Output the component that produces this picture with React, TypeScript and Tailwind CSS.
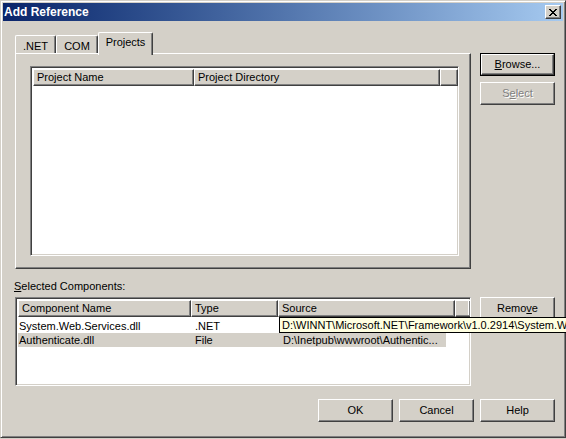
import type { ReactNode } from "react";
import clsx from "clsx";

// Win2000 classic 3D edges
const RAISED =
  "border border-t-white border-l-white border-r-[#404040] border-b-[#404040] shadow-[inset_-1px_-1px_0_#808080]";
const SUNKEN =
  "border border-t-[#808080] border-l-[#808080] border-r-white border-b-white shadow-[inset_1px_1px_0_#404040,inset_-1px_-1px_0_#d4d0c8]";

function Button({
  children,
  isDefault,
  disabled,
}: {
  children: ReactNode;
  isDefault?: boolean;
  disabled?: boolean;
}) {
  return (
    <div className={clsx("h-[23px] w-[75px]", isDefault && "border border-black")}>
      <div
        className={clsx(
          "flex h-full w-full items-center justify-center text-[11px] leading-none",
          RAISED,
          disabled
            ? "text-[#808080] [text-shadow:1px_1px_0_#ffffff]"
            : "text-black",
        )}
      >
        {children}
      </div>
    </div>
  );
}

function HeaderCell({ w, children }: { w: string; children?: ReactNode }) {
  return (
    <div
      className={clsx(
        "flex h-[17px] shrink-0 items-center overflow-hidden whitespace-nowrap pl-[3px] text-[11px] leading-none",
        RAISED,
        w,
      )}
    >
      {children}
    </div>
  );
}

function Tab({
  label,
  selected,
  w,
}: {
  label: string;
  selected?: boolean;
  w: string;
}) {
  return (
    <div
      className={clsx(
        "relative flex shrink-0 items-start justify-center rounded-t-[2px] border-t border-l border-r border-t-white border-l-white border-r-[#404040] bg-[#d4d0c8] text-[11px] leading-none shadow-[inset_-1px_0_0_#808080]",
        w,
        selected ? "z-10 -mb-[2px] h-[23px] pt-[4px]" : "h-[18px] pt-[5px]",
      )}
    >
      {label}
    </div>
  );
}

export default function App() {
  return (
    <div className="relative h-[439px] w-[566px] overflow-hidden bg-[#d4d0c8] font-['Tahoma','Liberation_Sans',Arial,sans-serif] text-black">
      <div className="flex h-[438px] flex-col border border-t-[#d4d0c8] border-l-[#d4d0c8] border-r-[#404040] border-b-[#404040] p-[2px] shadow-[inset_1px_1px_0_#ffffff,inset_-1px_-1px_0_#808080]">
        {/* Title bar */}
        <div className="flex h-[18px] shrink-0 items-center justify-between bg-linear-to-r from-[#0a246a] to-[#a6caf0] pl-[1px] pr-[2px]">
          <span className="text-[12px] font-bold leading-none text-white">
            Add Reference
          </span>
          <div className={clsx("flex h-[14px] w-[16px] items-center justify-center bg-[#d4d0c8]", RAISED)}>
            <svg width="8" height="7" viewBox="0 0 8 7" shapeRendering="crispEdges">
              <path
                d="M0 0h2v1H0zM1 1h2v1H1zM2 2h2v1H2zM3 3h2v1H3zM2 4h2v1H2zM1 5h2v1H1zM0 6h2v1H0zM6 0h2v1H6zM5 1h2v1H5zM4 2h2v1H4zM4 4h2v1H4zM5 5h2v1H5zM6 6h2v1H6z"
                fill="#000"
              />
            </svg>
          </div>
        </div>

        <div className="flex flex-1 flex-col pl-[12px] pr-[8px]">
          {/* Tabs + panel */}
          <div className="flex gap-[9px]">
            <div className="w-[456px]">
              <div className="mt-[11px] flex h-[21px] items-end">
                <Tab label=".NET" w="w-[41px]" />
                <Tab label="COM" w="w-[42px]" />
                <Tab label="Projects" w="w-[55px]" selected />
              </div>
              <div className={clsx("h-[216px] pl-[14px] pt-[12px]", RAISED)}>
                <div className={clsx("h-[190px] w-[429px] overflow-hidden bg-white p-[2px]", SUNKEN)}>
                  <div className="flex bg-[#d4d0c8]">
                    <HeaderCell w="w-[161px]">Project Name</HeaderCell>
                    <HeaderCell w="w-[246px]">Project Directory</HeaderCell>
                    <HeaderCell w="w-[18px]" />
                  </div>
                </div>
              </div>
            </div>
            <div className="mt-[32px] flex flex-col gap-[6px]">
              <Button isDefault>
                <span>
                  <span className="underline">B</span>rowse...
                </span>
              </Button>
              <Button disabled>
                <span>
                  S<span className="underline">e</span>lect
                </span>
              </Button>
            </div>
          </div>

          {/* Selected components */}
          <div className="-ml-px mt-[11px] h-[13px] text-[11px] leading-[13px]">
            <span className="underline">S</span>elected Components:
          </div>
          <div className="mt-[4px] flex gap-[9px]">
            <div className={clsx("h-[89px] w-[456px] overflow-hidden bg-white p-[2px]", SUNKEN)}>
              <div className="flex bg-[#d4d0c8]">
                <HeaderCell w="w-[173px]">Component Name</HeaderCell>
                <HeaderCell w="w-[87px]">Type</HeaderCell>
                <HeaderCell w="w-[177px]">Source</HeaderCell>
                <HeaderCell w="w-[16px]" />
              </div>
              <div className="pt-[2px] text-[11px] leading-[14px]">
                <div className="flex h-[14px] whitespace-nowrap">
                  <div className="w-[173px] pl-[1px]">System.Web.Services.dll</div>
                  <div className="w-[87px] pl-[4px]">.NET</div>
                </div>
                <div className="flex h-[14px] w-[428px] whitespace-nowrap bg-[#d4d0c8]">
                  <div className="w-[173px] pl-[1px]">Authenticate.dll</div>
                  <div className="w-[87px] pl-[4px]">File</div>
                  <div className="pl-[5px]">{"D:\\Inetpub\\wwwroot\\Authentic..."}</div>
                </div>
              </div>
            </div>
            <div>
              <Button>
                <span>
                  Remo<span className="underline">v</span>e
                </span>
              </Button>
            </div>
          </div>

          {/* Dialog buttons */}
          <div className="mt-[13px] flex justify-end gap-[6px]">
            <Button>OK</Button>
            <Button>Cancel</Button>
            <Button>Help</Button>
          </div>
        </div>
      </div>

      {/* Tooltip over the Source cell, running off the screen edge */}
      <div className="absolute left-[279px] top-[317px] z-20 flex h-[16px] w-[300px] items-center whitespace-nowrap border border-black bg-[#ffffe1] pl-[2px] text-[11px] leading-none">
        {"D:\\WINNT\\Microsoft.NET\\Framework\\v1.0.2914\\System.W"}
      </div>
    </div>
  );
}
